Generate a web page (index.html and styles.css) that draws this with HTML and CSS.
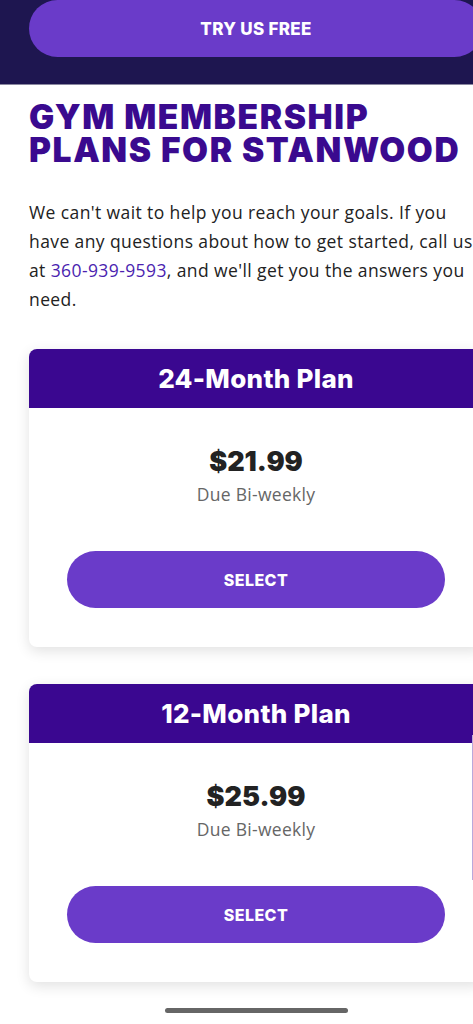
FILE: index.html
```html
<!DOCTYPE html>
<html>
<head>
<meta charset="utf-8">
<link rel="stylesheet" href="styles.css">
</head>
<body>
<div class="page">
  <header class="topband">
    <a class="btn btn-top">TRY US FREE</a>
  </header>
  <section class="intro">
    <h1 class="title">GYM MEMBERSHIP<br>PLANS FOR STANWOOD</h1>
    <p class="lead">We can't wait to help you reach your goals. If you have any questions about how to get started, call us at <a class="phone">360-939-9593</a>, and we'll get you the answers you need.</p>
  </section>
  <section class="plans">
    <div class="card">
      <div class="card-head">24-Month Plan</div>
      <div class="card-body">
        <div class="price">$21.99</div>
        <div class="due">Due Bi-weekly</div>
        <a class="btn btn-select">SELECT</a>
      </div>
    </div>
    <div class="card card-peek">
      <div class="card-head">12-Month Plan</div>
      <div class="card-body">
        <div class="price">$25.99</div>
        <div class="due">Due Bi-weekly</div>
        <a class="btn btn-select">SELECT</a>
      </div>
      <span class="edge"></span>
    </div>
  </section>
  <div class="home-bar"></div>
</div>
</body>
</html>
```
FILE: styles.css
```css
html, body {
  margin: 0;
  padding: 0;
  background: #ffffff;
  overflow-x: hidden;
}
.page {
  width: 473px;
  height: 1024px;
  overflow: hidden;
  position: relative;
  font-family: "Open Sans", "Noto Sans", sans-serif;
}
.topband {
  background: #1e1650;
  height: 85px;
  border-bottom: 1px solid #8a88a0;
  box-sizing: border-box;
  padding-left: 29px;
}
.btn {
  display: flex;
  align-items: center;
  justify-content: center;
  background: #6a3bc9;
  color: #fff;
  font-family: "Inter", sans-serif;
  font-weight: 800;
  border-radius: 29px;
  text-decoration: none;
}
.btn-top {
  width: 454px;
  height: 57px;
  font-size: 17px;
  letter-spacing: 0.3px;
}
.intro {
  padding: 16px 0 0 29px;
}
.title {
  margin: 0;
  font-family: "Inter", sans-serif;
  font-weight: 900;
  font-size: 33.5px;
  line-height: 33px;
  color: #3a0a8f;
  letter-spacing: 1.6px;
  white-space: nowrap;
}
.lead {
  margin: 31px 0 0 0;
  font-family: "Open Sans", sans-serif;
  font-size: 17.5px;
  line-height: 29px;
  color: #222;
  width: 452px;
  letter-spacing: 0.4px;
}
.phone {
  color: #4b1fb0;
}
.plans {
  padding: 35px 0 0 29px;
  display: flex;
  flex-direction: column;
  gap: 37px;
}
.card {
  width: 454px;
  border-radius: 8px;
  background: #fff;
  box-shadow: 0 4px 14px rgba(0,0,0,0.12);
  overflow: hidden;
  position: relative;
}
.card-head {
  background: #3a0790;
  color: #fff;
  height: 59px;
  display: flex;
  align-items: center;
  justify-content: center;
  font-family: "Inter", sans-serif;
  font-weight: 800;
  font-size: 26px;
  letter-spacing: 0.3px;
}
.card-body {
  display: flex;
  flex-direction: column;
  align-items: center;
  padding: 38px 38px 39px;
}
.price {
  font-family: "Inter", sans-serif;
  font-weight: 900;
  font-size: 27px;
  line-height: 32px;
  color: #222;
}
.due {
  font-family: "Open Sans", sans-serif;
  font-size: 17.5px;
  line-height: 24px;
  color: #666;
  margin-top: 4px;
  letter-spacing: 0.3px;
}
.btn-select {
  width: 100%;
  height: 57px;
  margin-top: 45px;
  font-size: 16px;
  letter-spacing: 0.4px;
}
.edge {
  position: absolute;
  left: 443px;
  top: 51px;
  width: 1px;
  height: 145px;
  background: #b9a9dc;
}
.home-bar {
  position: absolute;
  left: 165px;
  top: 1008px;
  width: 183px;
  height: 5px;
  border-radius: 3px;
  background: #666;
}
```
